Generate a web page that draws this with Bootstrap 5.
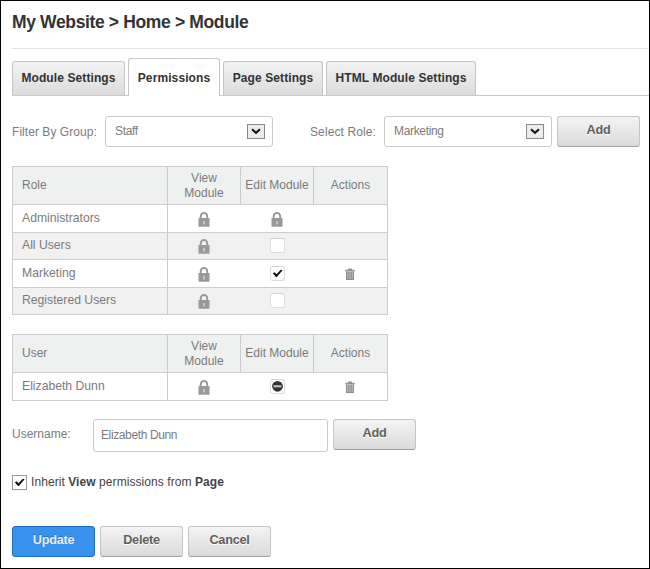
<!DOCTYPE html>
<html lang="en">
<head>
<meta charset="utf-8">
<title>Module Permissions</title>
<link href="https://cdn.jsdelivr.net/npm/bootstrap@5.3.0/dist/css/bootstrap.min.css" rel="stylesheet">
<style>
body{font:12px/15px "Liberation Sans",Arial,sans-serif;color:#7b7b7b;background:#fff}
.frame{width:650px;height:569px;border:1px solid #000;padding:0 0 0 11px}
h1{font-size:17.5px;line-height:20px;font-weight:700;letter-spacing:-.36px;color:#333;margin:0;padding-top:11px;height:48px;border-bottom:1px solid #e3e3e3;white-space:nowrap}
.nav-tabs.tabset{height:47px;gap:3px;border-bottom:1px solid #c8c8c8;--bs-nav-tabs-border-width:0px;flex-wrap:nowrap}
.tabset .nav-link{height:34px;padding:9px 0 0;border:1px solid #c6c6c6;border-bottom:0;border-radius:3px 3px 0 0;margin:0;background:linear-gradient(#f2f2f2,#dcdcdc);color:#333;font-weight:700;font-size:12px;letter-spacing:.1px;line-height:15px;text-align:center;white-space:nowrap}
.tabset .nav-link.active{height:38px;background:#fff;padding-top:12px;margin-bottom:-1px;color:#333;border-color:#c6c6c6}
.t1{width:113px}.t2{width:92px}.t3{width:100px}.t4{width:150px}
.filters{height:31px;margin-top:20px}
.lab1{width:93px;padding-top:2px;letter-spacing:.05px;white-space:nowrap}
.lab2{width:111px;padding:2px 0 0 37px;white-space:nowrap;letter-spacing:.1px}
.picker{height:31px;border:1px solid #c9c9c9;border-radius:3px;padding:0 7px 1px 9px;background:#fff;letter-spacing:-.33px}
.p1{width:168px}.p2{width:168px}
.arrow{width:18px;height:15px;border:1px solid #8b8b8b;background:#ececec}
.btn.act{width:83px;height:31px;padding:0 0 2px;border:1px solid #c5c5c5;border-bottom-color:#a0a0a0;border-radius:3px;background:linear-gradient(#f4f4f4,#dadada);font-size:12.7px;letter-spacing:-.25px;line-height:15px;font-weight:700;color:#5f5f5f;text-shadow:0 1px 0 #fff}
.btn.act.prime{background:#3891ec;border-color:#1c6dbb;color:#e3f0fd;text-shadow:0 -1px 0 #2a70b8}
.filters .act{margin-left:5px}
.table.grid{width:375px;table-layout:fixed;border-collapse:collapse;color:#7b7b7b;margin:0;border:1px solid #ccc}
.table.roles{margin-top:19px}.table.users{margin-top:19px}
.grid th,.grid td{border:1px solid #ccc;padding:0;font-weight:400;text-align:center;vertical-align:middle;height:27.5px;line-height:15px;background:#fff;color:#7b7b7b}
.grid td{border-width:1px 0}
.grid td:first-child{border-right-width:1px;font-size:12.2px}
.grid th{background:#eef1f0;height:38px}
.grid th:first-child,.grid td:first-child{text-align:left;padding-left:9px}
.grid .alt td{background:#f1f1f1}
.grid svg,.grid .box{display:block;margin:0 auto}
.grid .lock{margin-top:2px}
.grid .bin{margin-top:2px}
.box{width:15px;height:15px;border:1px solid #dedede;border-top-color:#d0d0d0;border-radius:3px;background:#fff}
.box svg{width:13px;height:13px}
.username-row{margin-top:18px}.username-row label{width:81px;padding-top:8px}.username-row .act{margin-left:5px}
.user-field{width:235px;height:33px;border:1px solid #c9c9c9;border-radius:3px;padding:0 7px;font-size:12px;letter-spacing:-.38px;color:#7b7b7b}
.inherit{color:#444;margin-top:23px;height:16px;letter-spacing:.07px}
.tick{width:15px;height:15px;border:1px solid #999;background:#fff}
.final-actions{margin-top:35px;gap:5px}
</style>
</head>
<body>
<svg width="0" height="0" class="d-none">
<symbol id="lock" viewBox="0 0 12 15"><path d="M2.7 7V4.2a3.2 3.2 0 0 1 6.5 0V7" fill="none" stroke="#999" stroke-width="1.9"/><rect x=".5" y="6" width="11" height="8.7" rx=".5" fill="#999"/><path d="M5.4 9h1.3v3.4H5.4z" fill="#ddd"/></symbol>
<symbol id="bin" viewBox="0 0 10 12"><path d="M3 1.8V.6h4v1.2h2.7v1.7H.3V1.8z" fill="#949494"/><path d="M1 3.5h8V12H1z" fill="#b5b5b5"/><path d="M1.5 3.5v8h7v-8M3.8 4v7M6.2 4v7" fill="none" stroke="#8c8c8c"/></symbol>
<symbol id="check" viewBox="0 0 13 13"><path d="M1.8 6.3 3.8 5.3l1.6 1.9L9.8 2.8l1.8.4-5.8 6.7H4.9z" fill="#111"/></symbol>
<symbol id="down" viewBox="0 0 16 13"><path d="M4 4.2 8 7.8l4-3.6" fill="none" stroke="#111" stroke-width="2"/></symbol>
</svg>
<main class="frame overflow-hidden">
<h1>My Website &gt; Home &gt; Module</h1>
<nav class="nav nav-tabs tabset align-items-end">
<a class="nav-link t1">Module Settings</a><a class="nav-link active t2">Permissions</a><a class="nav-link t3">Page Settings</a><a class="nav-link t4">HTML Module Settings</a>
</nav>
<div class="filters d-flex align-items-center">
<label class="lab1">Filter By Group:</label>
<div class="picker p1 d-flex align-items-center justify-content-between"><span>Staff</span><span class="arrow d-flex"><svg width="16" height="13"><use href="#down"/></svg></span></div>
<label class="lab2">Select Role:</label>
<div class="picker p2 d-flex align-items-center justify-content-between"><span>Marketing</span><span class="arrow d-flex"><svg width="16" height="13"><use href="#down"/></svg></span></div>
<button class="btn act">Add</button>
</div>
<table class="table grid roles">
<colgroup><col width="155"><col width="73"><col width="73"><col width="74"></colgroup>
<tr><th>Role</th><th>View<br>Module</th><th>Edit Module</th><th>Actions</th></tr>
<tr><td>Administrators</td><td><svg class="lock" width="12" height="15"><use href="#lock"/></svg></td><td><svg class="lock" width="12" height="15"><use href="#lock"/></svg></td><td></td></tr>
<tr class="alt"><td>All Users</td><td><svg class="lock" width="12" height="15"><use href="#lock"/></svg></td><td><span class="box"></span></td><td></td></tr>
<tr><td>Marketing</td><td><svg class="lock" width="12" height="15"><use href="#lock"/></svg></td><td><span class="box"><svg><use href="#check"/></svg></span></td><td><svg class="bin" width="10" height="12"><use href="#bin"/></svg></td></tr>
<tr class="alt"><td>Registered Users</td><td><svg class="lock" width="12" height="15"><use href="#lock"/></svg></td><td><span class="box"></span></td><td></td></tr>
</table>
<table class="table grid users">
<colgroup><col width="155"><col width="73"><col width="73"><col width="74"></colgroup>
<tr><th>User</th><th>View<br>Module</th><th>Edit Module</th><th>Actions</th></tr>
<tr><td>Elizabeth Dunn</td><td><svg class="lock" width="12" height="15"><use href="#lock"/></svg></td><td><span class="box"><svg viewBox="0 0 13 13"><circle cx="6.5" cy="6.3" r="5.4" fill="#333"/><path d="M2.5 5.2h8v2.2h-8z" fill="#bbb"/></svg></span></td><td><svg class="bin" width="10" height="12"><use href="#bin"/></svg></td></tr>
</table>
<div class="d-flex username-row">
<label>Username:</label><input class="form-control user-field" value="Elizabeth Dunn" aria-label="Username"><button class="btn act">Add</button>
</div>
<div class="inherit d-flex align-items-center"><span class="tick me-1"><svg class="d-block" width="13" height="13"><use href="#check"/></svg></span><span>Inherit <b>View</b> permissions from <b>Page</b></span></div>
<div class="d-flex final-actions"><button class="btn act prime">Update</button><button class="btn act">Delete</button><button class="btn act">Cancel</button></div>
</main>
<script src="https://cdn.jsdelivr.net/npm/bootstrap@5.3.0/dist/js/bootstrap.bundle.min.js"></script>
</body>
</html>
